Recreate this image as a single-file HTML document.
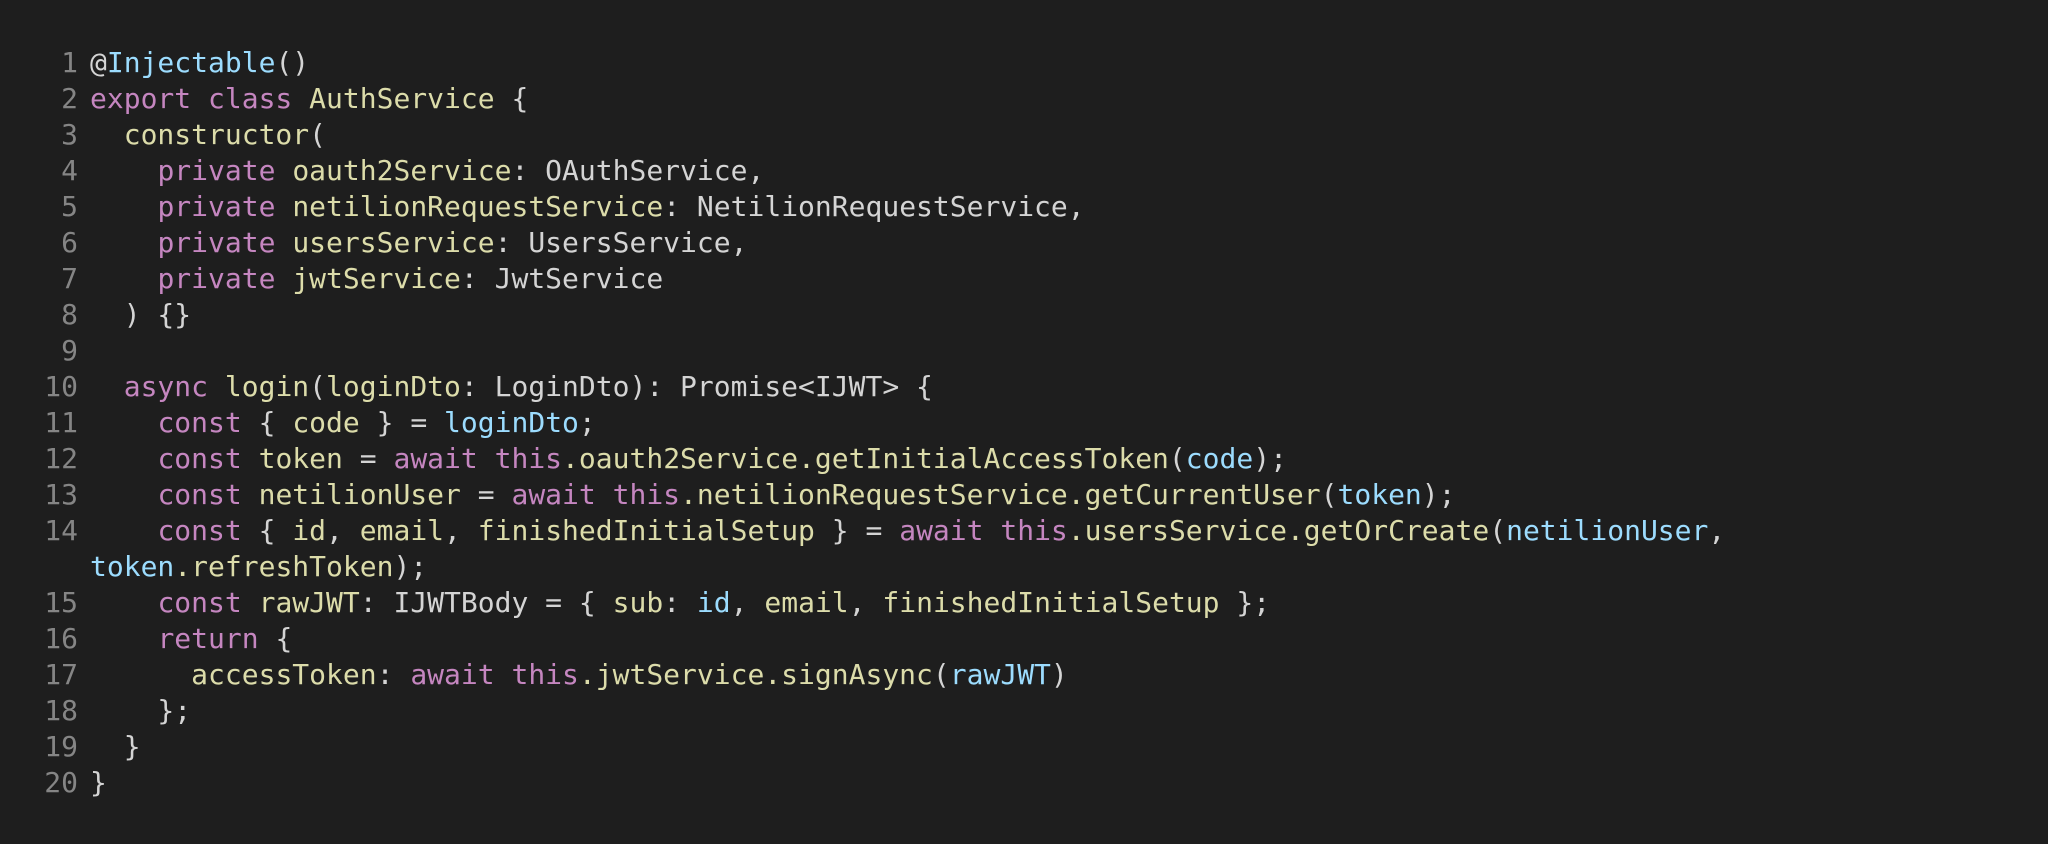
<!DOCTYPE html>
<html><head><meta charset="utf-8"><style>
html,body{margin:0;padding:0;background:#1e1e1e;width:2048px;height:844px;overflow:hidden}
.wrap{position:absolute;top:45px;left:0;font-family:"DejaVu Sans Mono","Liberation Mono",monospace;font-size:28px;line-height:36px;white-space:pre;color:#d4d4d4}
.ln{position:absolute;left:10px;width:68px;text-align:right;color:#858585}
.code{position:absolute;left:90px}
.k{color:#c586c0}.y{color:#dcdcaa}.b{color:#9cdcfe}
</style></head><body>
<div class="wrap"><div class="ln">1
2
3
4
5
6
7
8
9
10
11
12
13
14

15
16
17
18
19
20</div><div class="code">@<span class="b">Injectable</span>()
<span class="k">export class</span> <span class="y">AuthService</span> {
  <span class="y">constructor</span>(
    <span class="k">private</span> <span class="y">oauth2Service</span>: OAuthService,
    <span class="k">private</span> <span class="y">netilionRequestService</span>: NetilionRequestService,
    <span class="k">private</span> <span class="y">usersService</span>: UsersService,
    <span class="k">private</span> <span class="y">jwtService</span>: JwtService
  ) {}

  <span class="k">async</span> <span class="y">login</span>(<span class="y">loginDto</span>: LoginDto): Promise&lt;IJWT&gt; {
    <span class="k">const</span> { <span class="y">code</span> } = <span class="b">loginDto</span>;
    <span class="k">const</span> <span class="y">token</span> = <span class="k">await this</span><span class="y">.oauth2Service.getInitialAccessToken</span>(<span class="b">code</span>);
    <span class="k">const</span> <span class="y">netilionUser</span> = <span class="k">await this</span><span class="y">.netilionRequestService.getCurrentUser</span>(<span class="b">token</span>);
    <span class="k">const</span> { <span class="y">id</span>, <span class="y">email</span>, <span class="y">finishedInitialSetup</span> } = <span class="k">await this</span><span class="y">.usersService.getOrCreate</span>(<span class="b">netilionUser</span>,
<span class="b">token</span><span class="y">.refreshToken</span>);
    <span class="k">const</span> <span class="y">rawJWT</span>: IJWTBody = { <span class="y">sub</span>: <span class="b">id</span>, <span class="y">email</span>, <span class="y">finishedInitialSetup</span> };
    <span class="k">return</span> {
      <span class="y">accessToken</span>: <span class="k">await this</span><span class="y">.jwtService.signAsync</span>(<span class="b">rawJWT</span>)
    };
  }
}</div></div>
</body></html>
